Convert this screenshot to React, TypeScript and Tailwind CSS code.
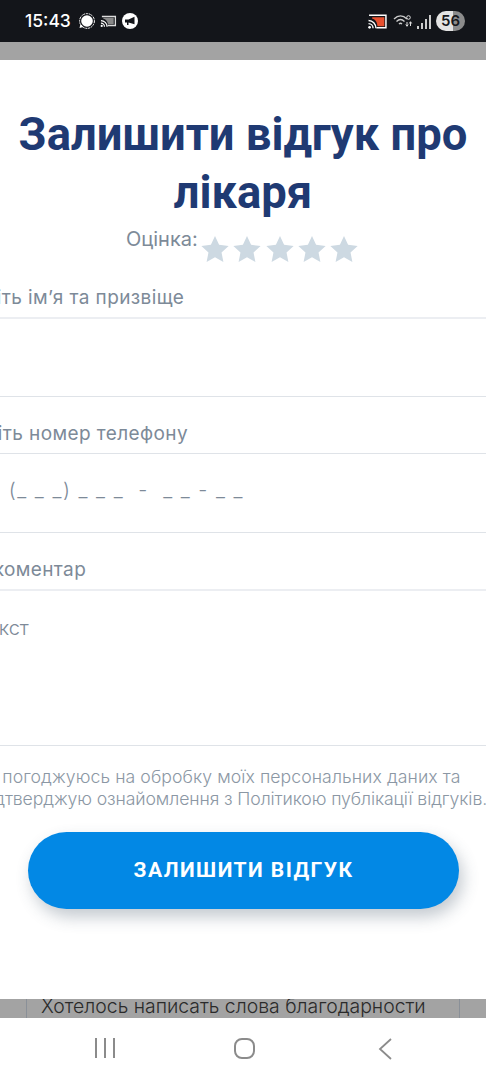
import React from 'react';

const gilroy = { fontFamily: 'Inter, "Noto Sans", sans-serif' };

function Star() {
  return (
    <svg viewBox="0 0 24 24" className="h-[28px] w-[28px] fill-[#cdd9e2]">
      <path d="M12 .8l3.5 7.6 8.2 1-6.1 5.6 1.6 8.2L12 19.1l-7.2 4.1 1.6-8.2L.3 9.4l8.2-1z" />
    </svg>
  );
}

function StatusBar() {
  return (
    <div className="flex h-[42px] shrink-0 items-center justify-between bg-[#13151a] pl-[25px] pr-[21px] text-white">
      <div className="flex items-center">
        <span className="text-[17.5px] font-medium" style={{ fontFamily: 'Inter, sans-serif' }}>15:43</span>
        <svg viewBox="0 0 16 16" className="ml-[8px] h-[16px] w-[16px]">
          <circle cx="8" cy="8" r="5.8" fill="#fff" />
          <circle cx="8" cy="8" r="7.4" fill="none" stroke="#fff" strokeWidth="1" strokeDasharray="2 .8" />
          <path d="M1.500 11l-1 4 4-1z" fill="#fff" />
        </svg>
        <svg viewBox="0 0 18 14" className="ml-[5px] h-[14px] w-[17px]">
          <path d="M2 3V1.500h15v11H8v-1.400h7.600V3z" fill="#ddd" />
          <path d="M3.500 3.500h11v7h-6C8 7 6 5 3.500 4.500z" fill="#888" />
          <path d="M1 6.500c3.500 0 6.500 3 6.500 6.500M1 9.300c2 0 3.700 1.700 3.700 3.700" fill="none" stroke="#fff" strokeWidth="1.300" />
          <circle cx="1.800" cy="12.200" r="1.200" fill="#fff" />
        </svg>
        <svg viewBox="0 0 16 16" className="ml-[5px] h-[16px] w-[16px]">
          <circle cx="8" cy="8" r="8" fill="#fff" />
          <path d="M3 6.500h3.500L12.500 3.800v7.400L6.500 9.500v2.500H5V9.500H3z" fill="#13151a" />
        </svg>
      </div>
      <div className="flex items-center">
        <svg viewBox="0 0 18 14" className="h-[15px] w-[19px]">
          <path d="M1 1h16v12H8" fill="none" stroke="#fff" strokeWidth="1.400" />
          <path d="M4 3h11.500v8.500H9C8.500 7.500 7 5 4 4.500z" fill="#e8502f" />
          <path d="M.5 6c4 0 7 3.300 7 7.500M.5 9c2.400 0 4.300 2 4.300 4.500" fill="none" stroke="#fff" strokeWidth="1.300" />
          <circle cx="1.500" cy="12.500" r="1.300" fill="#fff" />
        </svg>
        <svg viewBox="0 0 20 16" className="ml-[6px] h-[16px] w-[20px]">
          <path d="M1 6c4-4 9-4 13 0M3.500 8.500c2.500-2.500 5.500-2.500 8 0M6 11c1-1 2-1 3 0" fill="none" stroke="#ccc" strokeWidth="1.300" />
          <path d="M14 13V9M12.800 11.500l1.200 1.800 1.200-1.800M17.500 9v4M16.300 10.500l1.200-1.800 1.200 1.800" fill="none" stroke="#ddd" strokeWidth="1" />
          <circle cx="15.500" cy="4.500" r="1.800" fill="none" stroke="#ddd" strokeWidth="1" />
        </svg>
        <div className="ml-[4px] flex h-[15px] items-end gap-[2px]">
          <span className="h-[3px] w-[2px] bg-[#ccc]" />
          <span className="h-[6px] w-[2px] bg-[#ccc]" />
          <span className="h-[10px] w-[2px] bg-[#ccc]" />
          <span className="h-[14px] w-[2px] bg-[#ccc]" />
        </div>
        <div className="ml-[5px] flex h-[20px] w-[29px] items-center justify-center rounded-full bg-[linear-gradient(90deg,#e4e4e4_60%,#8b8b8b_60%)] text-[15px] font-semibold text-[#16181c]" style={{ fontFamily: 'Inter, sans-serif' }}>
          56
        </div>
      </div>
    </div>
  );
}

function Label({ text, offset }: { text: string; offset: string }) {
  return (
    <div className={`h-[40px] whitespace-nowrap pt-[1px] text-[19px] leading-[40px] tracking-[0.4px] text-[#7d8a98] ${offset}`} style={gilroy}>
      {text}
    </div>
  );
}

export default function App() {
  return (
    <div className="flex h-[1080px] w-[486px] flex-col overflow-hidden bg-white">
      <StatusBar />
      <div className="h-[18px] shrink-0 bg-[#a3a3a3]" />

      <div className="flex h-[939px] shrink-0 flex-col overflow-hidden pt-[46px]">
        <h1 className="-mx-[4px] text-center text-[45.4px] font-bold leading-[58px] text-[#1f3a73]" style={{ fontFamily: 'Roboto, sans-serif' }}>
          Залишити відгук про лікаря
        </h1>
        <div className="mt-[3px] flex h-[36px] items-start pl-[126px]">
          <span className="w-[75px] pt-[2px] text-[20px] leading-[24px] text-[#7d8a98]" style={gilroy}>Оцінка:</span>
          <div className="mt-[10px] flex gap-[4.3px]">
            <Star />
            <Star />
            <Star />
            <Star />
            <Star />
          </div>
        </div>

        <div className="mt-[16px]">
          <Label text="Введіть ім’я та призвіще" offset="-ml-[51px]" />
          <div className="h-[80px] border-y-2 border-b border-t-[#eceef2] border-b-[#dfe3e8]" />
        </div>

        <div className="mt-[16px]">
          <Label text="Введіть номер телефону" offset="-ml-[50px]" />
          <div className="h-[80px] border-y border-[#dfe3e8] pt-[22px]">
            <div className="-ml-[40px] whitespace-nowrap text-[20px] font-light leading-[28px] tracking-[1.5px] text-[#7d8a98]" style={gilroy}>
              +38 (_ _ _) _ _ _ &nbsp;-&nbsp; _ _ - _ _
            </div>
          </div>
        </div>

        <div className="mt-[16px]">
          <Label text="Ваш коментар" offset="-ml-[52px]" />
          <div className="h-[157px] border-y-2 border-b border-t-[#eceef2] border-b-[#dfe3e8] pt-[23px]">
            <div className="-ml-[24px] whitespace-nowrap text-[20px] font-light leading-[28px] text-[#7d8a98]" style={gilroy}>Текст</div>
          </div>
        </div>

        <div className="mt-[20px] -ml-[14px] whitespace-nowrap text-[17.65px] font-light leading-[22px] text-[#8b97a4]" style={gilroy}>
          <div className="tracking-[0.08px]">Я погоджуюсь на обробку моїх персональних даних та</div>
          <div className="-ml-[6px] tracking-[-0.1px]">підтверджую ознайомлення з Політикою публікації відгуків.</div>
        </div>

        <button className="ml-[28px] mt-[22px] h-[77px] w-[431px] shrink-0 rounded-full bg-[#0288e5] text-[21px] font-bold tracking-[1.45px] text-white shadow-[4px_8px_16px_rgba(60,80,100,0.3)]" style={{ fontFamily: 'Roboto, sans-serif' }}>
          ЗАЛИШИТИ ВІДГУК
        </button>
      </div>

      <div className="flex h-[19px] shrink-0 items-start overflow-hidden bg-[#a3a3a3]">
        <div className="ml-[26px] flex h-full w-[434px] items-start whitespace-nowrap border-x border-[#8a9098] pl-[14px] text-[19.4px] font-light leading-[14px] text-[#2a2a2a]" style={gilroy}>
          Хотелось написать слова благодарности
        </div>
      </div>

      <div className="flex flex-1 items-center bg-white pb-[2px] pl-[95px]">
        <div className="flex gap-[7px]">
          <span className="h-[20px] w-[2px] bg-[#8b8b8b]" />
          <span className="h-[20px] w-[2px] bg-[#8b8b8b]" />
          <span className="h-[20px] w-[2px] bg-[#8b8b8b]" />
        </div>
        <span className="ml-[119px] h-[21px] w-[21px] rounded-[8px] border-2 border-[#8b8b8b]" />
        <svg viewBox="0 0 14 22" className="ml-[123px] mt-[2px] h-[22px] w-[14px]">
          <path d="M13 1L2 11l11 10" fill="none" stroke="#8b8b8b" strokeWidth="1.800" />
        </svg>
      </div>
    </div>
  );
}
